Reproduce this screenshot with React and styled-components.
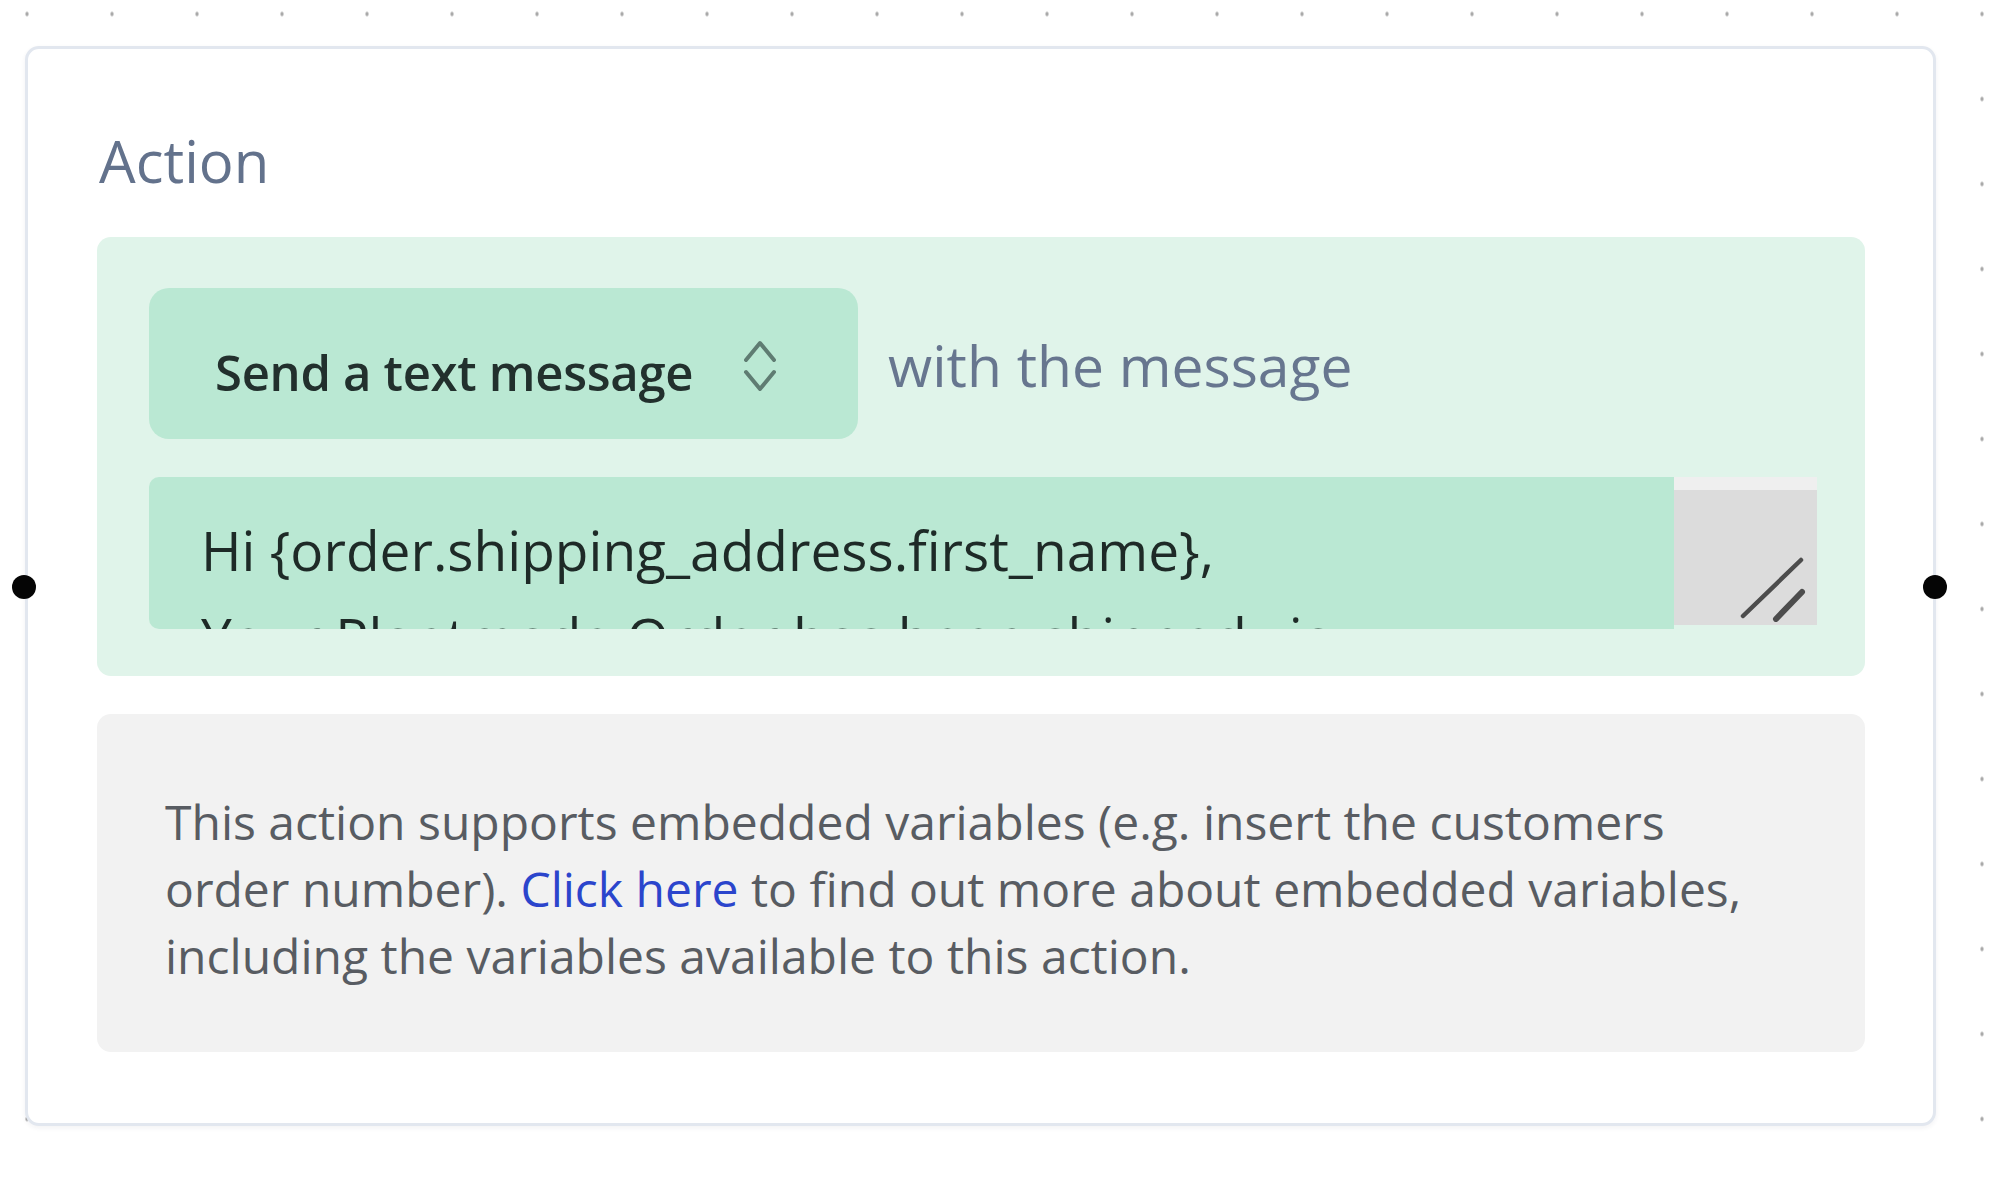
import React from 'react';
import styled, { createGlobalStyle } from 'styled-components';

const GlobalStyle = createGlobalStyle`
  * { box-sizing: border-box; }
  html, body {
    margin: 0;
    padding: 0;
  }
  body {
    width: 2000px;
    height: 1184px;
    overflow: hidden;
    font-family: "Open Sans", "Noto Sans", sans-serif;
    background-color: #ffffff;
    /* canvas dot grid */
    background-image: radial-gradient(ellipse 1.6px 2.6px at center, #a9a9a9 80%, transparent 100%);
    background-size: 85px 85px;
    background-position: -15.5px -28.5px;
  }
`;

// 캔버스 영역
const Canvas = styled.div`
  padding: 46px 0 0 25px;
`;

// 노드 카드
const Card = styled.div`
  position: relative;
  width: 1911px;
  background: #ffffff;
  border: 3px solid #e2e7ef;
  border-radius: 14px;
  box-shadow: 0 2px 5px rgba(30, 40, 60, 0.06);
  padding: 83px 68px 71px 69px;
`;

// 좌우 연결 포인트
const Handle = styled.span`
  position: absolute;
  top: 526px;
  ${props => (props.side === 'left' ? 'left: -16px;' : 'right: -14px;')}
  width: 24px;
  height: 24px;
  border-radius: 50%;
  background: #050505;
`;

const Label = styled.div`
  font-size: 58px;
  line-height: 58px;
  color: #63728c;
  margin-bottom: 47px;
  padding-left: 2px;
`;

// 초록색 액션 패널
const ActionPanel = styled.div`
  background: #e0f4ea;
  border-radius: 14px;
  padding: 51px 48px 47px 52px;
  display: flex;
  flex-direction: column;
  gap: 38px;
`;

const TopRow = styled.div`
  display: flex;
  align-items: center;
  gap: 30px;
`;

const SelectButton = styled.div`
  width: 709px;
  height: 151px;
  background: #bae8d3;
  border-radius: 20px;
  display: flex;
  align-items: center;
  padding: 4px 0 0 66px;
  gap: 50px;
`;

const SelectText = styled.span`
  font-size: 49px;
  font-weight: 600;
  color: #22302d;
  letter-spacing: -0.3px;
  white-space: nowrap;
  margin-top: 12px;
`;

const Suffix = styled.span`
  font-size: 57px;
  color: #67768f;
  white-space: nowrap;
  margin-top: 2px;
`;

// 메시지 입력 영역
const MessageBox = styled.div`
  display: flex;
  height: 152px;
`;

const MessageText = styled.div`
  flex: 1;
  background: #bae8d3;
  border-radius: 10px 0 0 10px;
  padding: 29px 0 0 52px;
  font-size: 55px;
  line-height: 87px;
  color: #1e2a27;
  overflow: hidden;
  white-space: pre;
`;

const Scrollbar = styled.div`
  width: 143px;
  height: 148px;
  background: #dcdcdc;
  border-top: 13px solid #efefef;
  display: flex;
  align-items: flex-end;
  justify-content: flex-end;
  padding: 0 10px 3px 0;
`;

// 안내 박스
const InfoBox = styled.div`
  margin-top: 38px;
  background: #f2f2f2;
  border-radius: 14px;
  padding: 74px 40px 63px 68px;
  font-size: 48px;
  line-height: 67px;
  color: #585c62;
`;

const InfoLine = styled.div`
  white-space: nowrap;
`;

const Link = styled.a`
  color: #2b45cc;
  text-decoration: none;
`;

const ChevronsIcon = () => (
  <svg width="34" height="54" viewBox="0 0 34 54" fill="none">
    <polyline points="3,21 17,4 31,21" stroke="#5f7c72" strokeWidth="4" strokeLinecap="round" strokeLinejoin="round" />
    <polyline points="3,33 17,50 31,33" stroke="#5f7c72" strokeWidth="4" strokeLinecap="round" strokeLinejoin="round" />
  </svg>
);

const ResizeGrip = () => (
  <svg width="70" height="70" viewBox="0 0 70 70" fill="none">
    <line x1="6" y1="64" x2="64" y2="8" stroke="#4d4d4d" strokeWidth="4.5" strokeLinecap="round" />
    <line x1="39" y1="67" x2="65" y2="40" stroke="#4d4d4d" strokeWidth="6" strokeLinecap="round" />
  </svg>
);

const App = () => {
  const message = 'Hi {order.shipping_address.first_name},\nYour Plantmade Order has been shipped via';

  return (
    <>
      <GlobalStyle />
      <Canvas>
        <Card>
          <Handle side="left" />
          <Handle side="right" />
          <Label>Action</Label>
          <ActionPanel>
            <TopRow>
              <SelectButton>
                <SelectText>Send a text message</SelectText>
                <ChevronsIcon />
              </SelectButton>
              <Suffix>with the message</Suffix>
            </TopRow>
            <MessageBox>
              <MessageText>{message}</MessageText>
              <Scrollbar>
                <ResizeGrip />
              </Scrollbar>
            </MessageBox>
          </ActionPanel>
          <InfoBox>
            <InfoLine>This action supports embedded variables (e.g. insert the customers</InfoLine>
            <InfoLine>
              order number). <Link href="#">Click here</Link> to find out more about embedded variables,
            </InfoLine>
            <InfoLine>including the variables available to this action.</InfoLine>
          </InfoBox>
        </Card>
      </Canvas>
    </>
  );
};

export default App;
